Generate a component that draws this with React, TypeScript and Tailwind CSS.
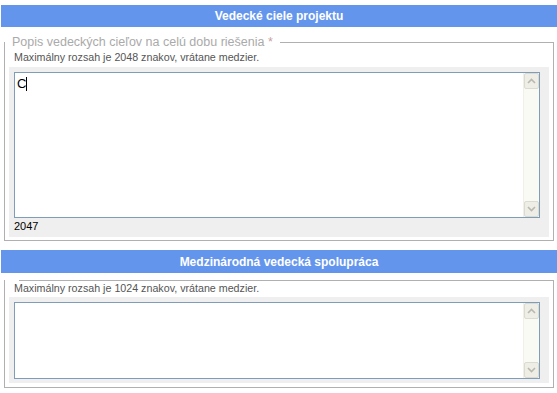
import React from "react";

function ScrollBtn({ up }: { up: boolean }) {
  return (
    <div className="w-[15px] h-[16px] bg-[#eeede6] border border-[#dcdbd2] rounded-[2px] flex items-center justify-center">
      <svg width="9" height="6" viewBox="0 0 9 6">
        <path
          d={up ? "M1 5 L4.5 1.5 L8 5" : "M1 1 L4.5 4.5 L8 1"}
          fill="none"
          stroke="#b9b9b0"
          strokeWidth="1.6"
        />
      </svg>
    </div>
  );
}

function FakeTextarea({ h, children }: { h: string; children?: React.ReactNode }) {
  return (
    <div className={`w-[526px] ${h} border border-[#7f9db9] bg-white flex`}>
      <div className="flex-1 pl-[2px] pt-[3px]">{children}</div>
      <div className="w-[16px] h-full bg-[#fafaf4] border-l border-[#f0efe8] flex flex-col justify-between items-center">
        <ScrollBtn up />
        <ScrollBtn up={false} />
      </div>
    </div>
  );
}

export default function App() {
  return (
    <div
      className="w-[557px] h-[393px] bg-white pt-[5px] overflow-hidden"
      style={{ fontFamily: '"Liberation Sans", Arial, sans-serif' }}
    >
      <div className="ml-[1px] w-[556px] h-[22px] bg-[#6495ed] text-white font-bold text-[12px] flex items-center justify-center">
        Vedecké ciele projektu
      </div>

      <fieldset className="ml-[4px] mt-[8px] w-[550px] border border-[#b0b0b0] p-0">
        <legend className="px-[7px] text-[12.5px] leading-[15px] text-[#aaaaaa]">
          Popis vedeckých cieľov na celú dobu riešenia <span className="text-[#c8a0a0]">*</span>
        </legend>
        <div className="px-[4px] pb-[3px]">
          <div className="pl-[5px] pt-[1px] text-[10.7px] leading-[13px] text-[#555555]">
            Maximálny rozsah je 2048 znakov, vrátane medzier.
          </div>
          <div className="mt-[3px] w-[540px] h-[170px] bg-[#efefef] pt-[5px] pl-[5px]">
            <FakeTextarea h="h-[146px]">
              <div className="flex items-start text-[13px] leading-[15px] text-black">
                <span>C</span>
                <span className="w-[1px] h-[14px] bg-black mt-[1px]" />
              </div>
            </FakeTextarea>
            <div className="text-[11px] leading-[13px] text-black pt-[2px]">2047</div>
          </div>
        </div>
      </fieldset>

      <div className="ml-[1px] mt-[9px] w-[556px] h-[23px] bg-[#6495ed] text-white font-bold text-[12px] flex items-center justify-center">
        Medzinárodná vedecká spolupráca
      </div>

      <fieldset className="ml-[4px] mt-[7px] w-[550px] border border-[#b0b0b0] p-0">
        <legend className="px-[7px] h-0 leading-[0px]"></legend>
        <div className="px-[4px] pb-[4px]">
          <div className="pl-[5px] pt-[1px] text-[10.7px] leading-[13px] text-[#555555]">
            Maximálny rozsah je 1024 znakov, vrátane medzier.
          </div>
          <div className="mt-[2px] w-[540px] h-[86px] bg-[#efefef] pt-[5px] pl-[5px]">
            <FakeTextarea h="h-[77px]" />
          </div>
        </div>
      </fieldset>
    </div>
  );
}
